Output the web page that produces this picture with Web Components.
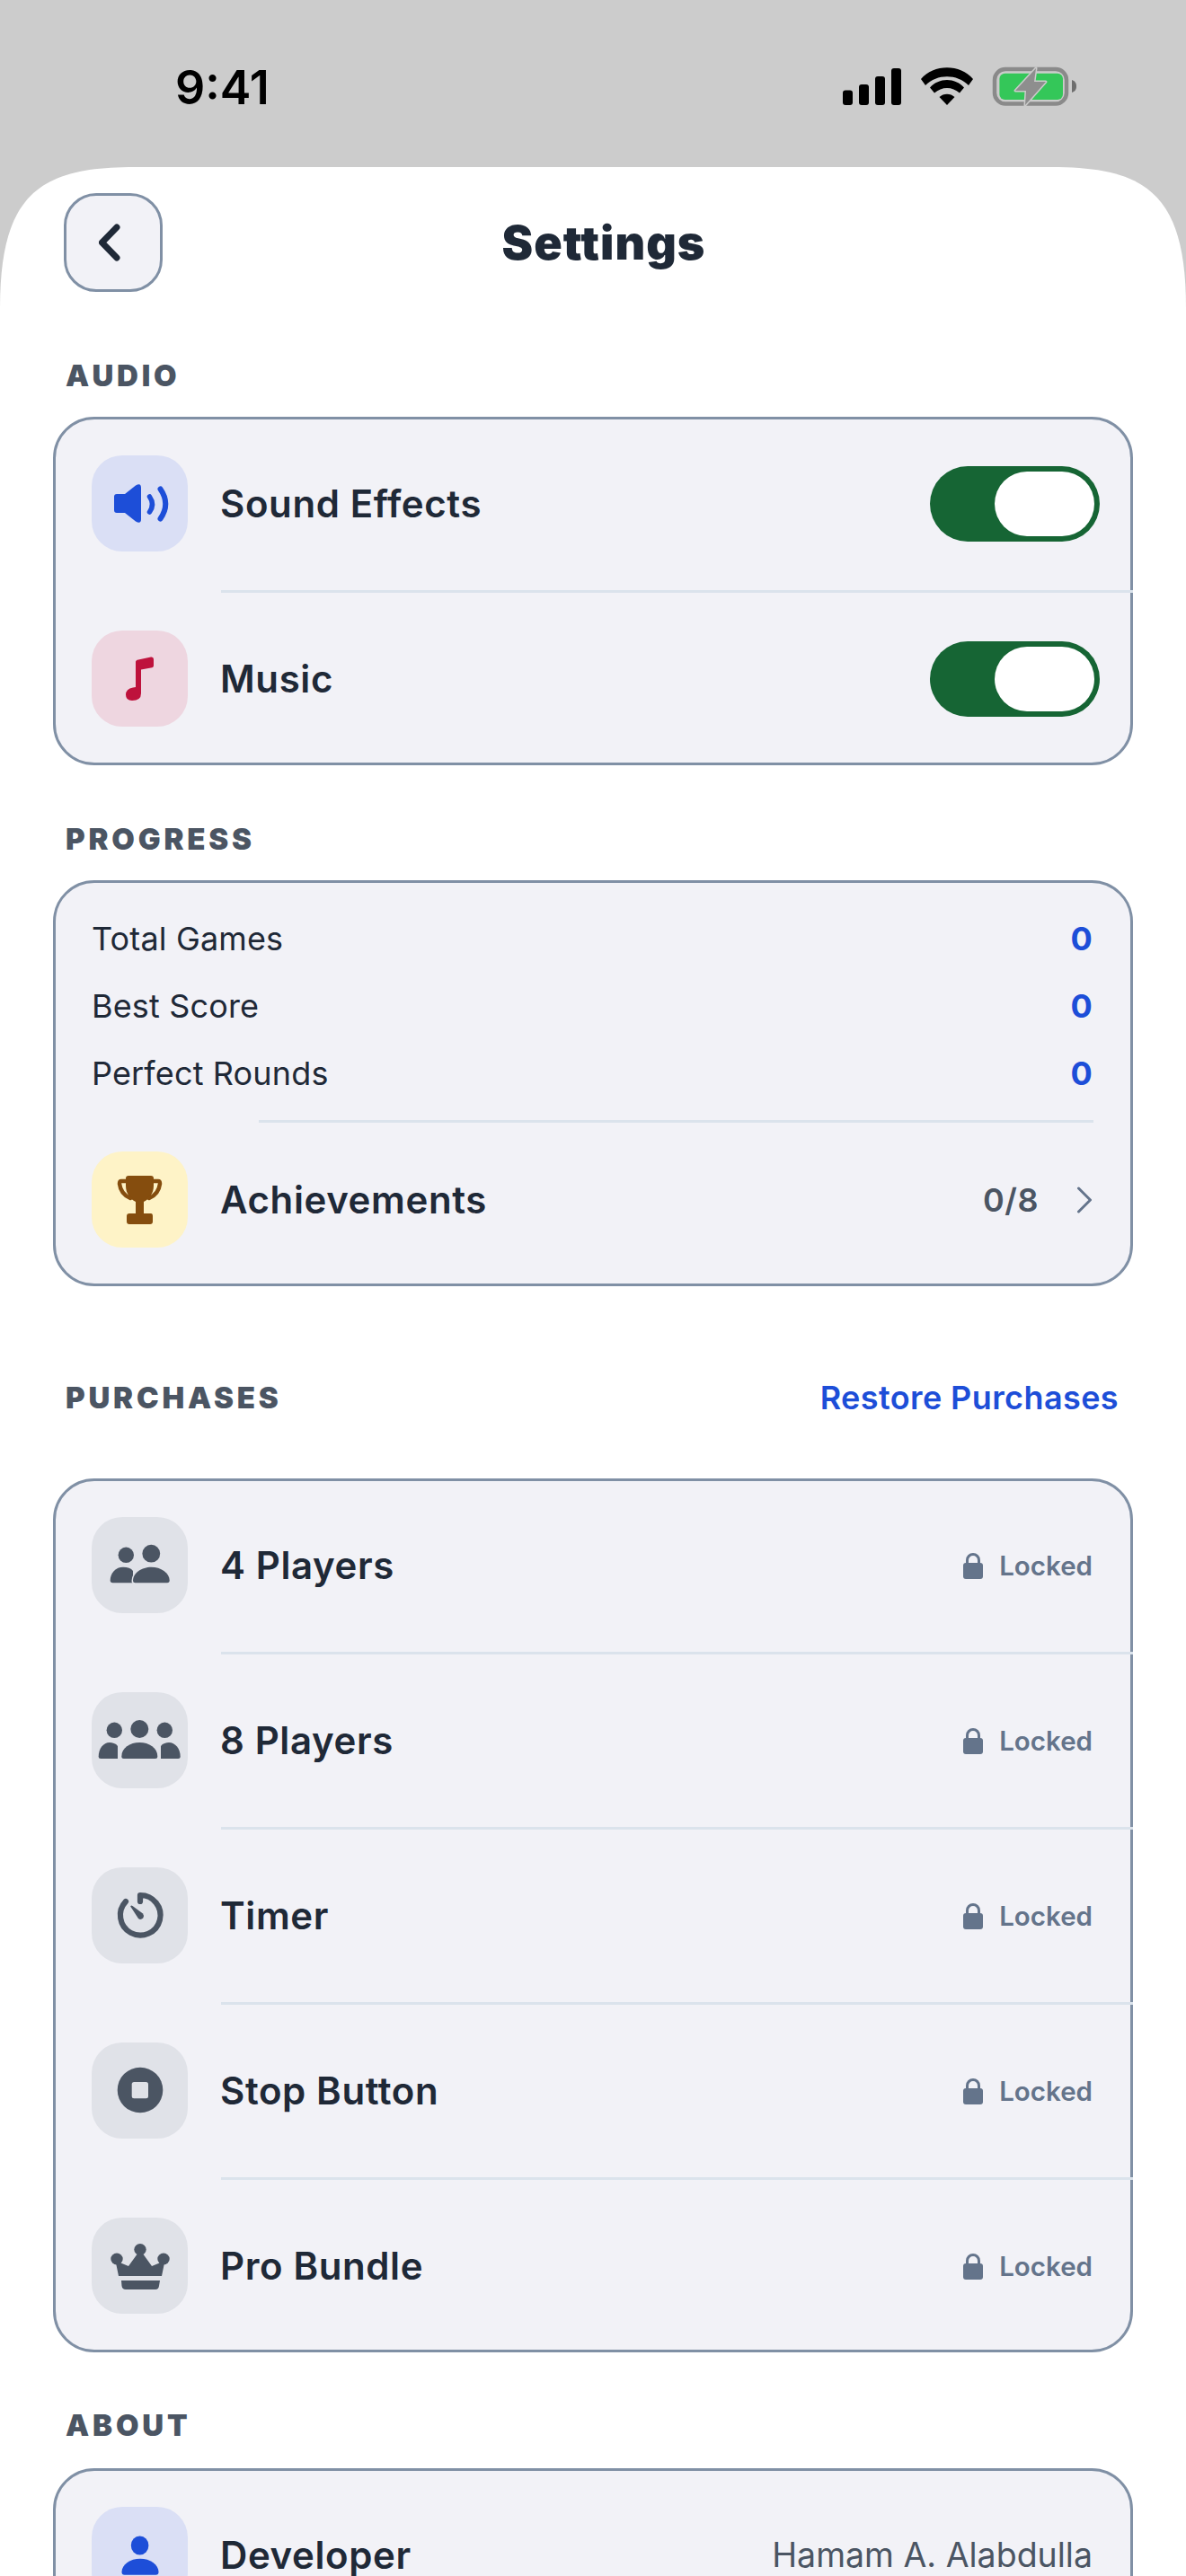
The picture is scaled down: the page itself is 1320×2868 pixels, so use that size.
<!DOCTYPE html>
<html lang="en">
<head>
<meta charset="utf-8">
<title>Settings</title>
<style>
  html, body { margin: 0; padding: 0; background: #ccc; }
  body { font-family: Inter, "Noto Sans", sans-serif; color: #1f2937; }
</style>
</head>
<body>
<settings-app>
  <status-bar slot="status"></status-bar>

  <nav-header title="Settings"></nav-header>

  <section-block heading="AUDIO" style="--gap:73px;--label-gap:26px">
    <settings-card>
      <setting-row label="Sound Effects" first>
        <app-icon slot="icon" name="speaker" tone="blue"></app-icon>
        <toggle-switch slot="end"></toggle-switch>
      </setting-row>
      <setting-row label="Music" last no-line>
        <app-icon slot="icon" name="music" tone="red"></app-icon>
        <toggle-switch slot="end"></toggle-switch>
      </setting-row>
    </settings-card>
  </section-block>

  <section-block heading="PROGRESS" style="--gap:62px;--label-gap:26px">
    <settings-card>
      <stat-list>
        <stat-row label="Total Games" value="0"></stat-row>
        <stat-row label="Best Score" value="0"></stat-row>
        <stat-row label="Perfect Rounds" value="0"></stat-row>
      </stat-list>
      <setting-row label="Achievements" last no-line compact>
        <app-icon slot="icon" name="trophy" tone="yellow"></app-icon>
        <count-link slot="end" value="0/8"></count-link>
      </setting-row>
    </settings-card>
  </section-block>

  <section-block heading="PURCHASES" action="Restore Purchases" style="--gap:104px;--label-gap:70px">
    <settings-card>
      <setting-row label="4 Players" first>
        <app-icon slot="icon" name="two" tone="gray"></app-icon>
        <locked-badge slot="end"></locked-badge>
      </setting-row>
      <setting-row label="8 Players">
        <app-icon slot="icon" name="three" tone="gray"></app-icon>
        <locked-badge slot="end"></locked-badge>
      </setting-row>
      <setting-row label="Timer">
        <app-icon slot="icon" name="timer" tone="gray"></app-icon>
        <locked-badge slot="end"></locked-badge>
      </setting-row>
      <setting-row label="Stop Button">
        <app-icon slot="icon" name="stop" tone="gray"></app-icon>
        <locked-badge slot="end"></locked-badge>
      </setting-row>
      <setting-row label="Pro Bundle" last no-line>
        <app-icon slot="icon" name="crown" tone="gray"></app-icon>
        <locked-badge slot="end"></locked-badge>
      </setting-row>
    </settings-card>
  </section-block>

  <section-block heading="ABOUT" style="--gap:61px;--label-gap:28px">
    <settings-card>
      <setting-row label="Developer" first>
        <app-icon slot="icon" name="person" tone="blue"></app-icon>
        <plain-value slot="end">Hamam A. Alabdulla</plain-value>
      </setting-row>
    </settings-card>
  </section-block>
</settings-app>

<script>
class SettingsApp extends HTMLElement {
  constructor() {
    super();
    this.attachShadow({ mode: 'open' }).innerHTML = `
      <style>
        :host { display: block; width: 1320px; height: 2868px; overflow: hidden; background: #ccc; }
        .sheet {
          background: #fff;
          height: 2682px;
          clip-path: path("M0 157 C0 28 46 0 150 0 H1170 C1274 0 1320 28 1320 157 V2682 H0 Z");
        }
      </style>
      <slot name="status"></slot>
      <div class="sheet"><slot></slot></div>`;
  }
}

class StatusBar extends HTMLElement {
  constructor() {
    super();
    this.attachShadow({ mode: 'open' }).innerHTML = `
      <style>
        :host { display: flex; justify-content: space-between; align-items: flex-start; height: 186px; padding: 75px 122px 0 195px; box-sizing: border-box; }
        .time { margin-top: 1px; font: 600 52px/44px Inter, sans-serif; color: #000; }
        .icons { display: flex; align-items: flex-start; gap: 22px; }
        svg { display: block; overflow: visible; }
      </style>
      <span class="time">9:41</span>
      <div class="icons">
        <svg width="65" height="42" viewBox="0 0 65 42">
          <rect x="0" y="25.500" width="11" height="16.500" rx="3"/>
          <rect x="18" y="19" width="11" height="23" rx="3"/>
          <rect x="36" y="10" width="11" height="32" rx="3"/>
          <rect x="54" y="1" width="11" height="41" rx="3"/>
        </svg>
        <svg width="58" height="42" viewBox="0 0 58 42">
          <path d="M0 13 C14 -4 44 -4 58 13 L53 20 C40 7 18 7 5 20 Z"/>
          <path d="M10 22.500 C20 11 38 11 48 22.500 L43 28.500 C35 21 23 21 15 28.500 Z"/>
          <path d="M20.500 33 C25 28.500 33 28.500 37.500 33 L29 42 Z"/>
        </svg>
        <svg width="93" height="44" viewBox="0 0 93 44">
          <rect x="2" y="2" width="80" height="38.500" rx="12" fill="none" stroke="#8a8a8a" stroke-width="4.500"/>
          <rect x="7.400" y="6.700" width="70.600" height="29.300" rx="6" fill="#34c759"/>
          <path d="M88 14 C91 15 93 17 93 21 C93 25 91 27 88 28 Z" fill="#6e6e6e"/>
          <path d="M48 1 L25 26 H37 L36 42 L59 16 H46 Z" fill="#8e8e8e" stroke="#ccc" stroke-width="3" stroke-linejoin="round" paint-order="stroke"/>
        </svg>
      </div>`;
  }
}

class NavHeader extends HTMLElement {
  constructor() {
    super();
    this.attachShadow({ mode: 'open' }).innerHTML = `
      <style>
        :host { display: flex; align-items: center; padding: 29px 157px 0 71px; }
        button {
          width: 110px; height: 110px; padding: 0; box-sizing: border-box;
          display: flex; align-items: center; justify-content: center;
          background: #f2f2f7; border: 3px solid #8090a5; border-radius: 36px;
        }
        button svg { margin-right: 4px; }
        h1 { flex: 1; margin: 0; padding-top: 2px; text-align: center; font: 900 52px/60px Inter, sans-serif; letter-spacing: 1px; color: #1f2937; }
      </style>
      <button aria-label="Back">
        <svg width="28" height="44" viewBox="0 0 28 44" fill="none" stroke="#1f2937" stroke-width="7" stroke-linecap="round" stroke-linejoin="round">
          <path d="M20 5 L3.500 22 L20 39"/>
        </svg>
      </button>
      <h1>${this.getAttribute('title')}</h1>`;
  }
}

class SectionBlock extends HTMLElement {
  constructor() {
    super();
    const action = this.getAttribute('action');
    this.attachShadow({ mode: 'open' }).innerHTML = `
      <style>
        :host { display: block; margin-top: var(--gap, 60px); }
        .head { display: flex; justify-content: space-between; align-items: center; height: 40px; padding: 0 75px 0 73px; margin-bottom: var(--label-gap, 26px); }
        h2 { margin: 0; font: 900 33px/40px Inter, sans-serif; letter-spacing: 3.800px; color: #4b5563; }
        a { font: 600 36px/40px Inter, sans-serif; letter-spacing: 0.400px; color: #1d4ed8; }
        .body { padding: 0 59px; }
      </style>
      <div class="head">
        <h2>${this.getAttribute('heading')}</h2>
        ${action ? `<a>${action}</a>` : ''}
      </div>
      <div class="body"><slot></slot></div>`;
  }
}

class SettingsCard extends HTMLElement {
  constructor() {
    super();
    this.attachShadow({ mode: 'open' }).innerHTML = `
      <style>
        :host { display: block; background: #f2f2f7; border: 3px solid #8090a5; border-radius: 46px; }
      </style>
      <slot></slot>`;
  }
}

class SettingRow extends HTMLElement {
  constructor() {
    super();
    this.attachShadow({ mode: 'open' }).innerHTML = `
      <style>
        :host { display: block; }
        .row { display: flex; align-items: center; gap: 36px; padding: 42px 42px 43px 40px; }
        :host([first]) .row { padding-top: 40px; }
        :host([last]) .row { padding-bottom: 40px; }
        :host([compact]) .row { padding-top: 32px; }
        .label { flex: 1; font: 600 42px/52px Inter, sans-serif; letter-spacing: 0.600px; color: #1f2937; }
        .line { height: 3px; margin: 0 -3px 0 184px; background: #dbe3ec; position: relative; }
        :host([no-line]) .line { display: none; }
      </style>
      <div class="row">
        <slot name="icon"></slot>
        <span class="label">${this.getAttribute('label')}</span>
        <slot name="end"></slot>
      </div>
      <div class="line"></div>`;
  }
}

const ICONS = {
  speaker: `
    <path d="M28 43 H37 L49 33.500 Q55 30 55 36 V71 Q55 77 49 73.500 L37 64 H28 Q25 64 25 61 V46 Q25 43 28 43 Z"/>
    <path d="M64.500 46 Q70.500 54.500 64.500 63" fill="none" stroke="currentColor" stroke-width="5.500" stroke-linecap="round"/>
    <path d="M76.500 37.500 Q88 54 76.500 70.500" fill="none" stroke="currentColor" stroke-width="6" stroke-linecap="round"/>`,
  music: `
    <path d="M49 35 Q49 33 52 32.500 L66 29.500 Q69 29 69 32 V39 Q69 41 66 41.500 L55 43.500 V70 Q55 78 45 78 Q38 78 38 71.500 Q38 65 46 63.500 L49 63 Z"/>`,
  trophy: `
    <path d="M38 30 Q38 27 41 27 H66 Q69 27 69 30 V38 C69 47 64 53 58 56 V69 H66 Q68 69 68 72 V78 Q68 81 65 81 H42 Q39 81 39 78 V72 Q39 69 42 69 H49 V56 C43 53 38 47 38 38 Z"/>
    <path d="M38 33 H33 Q31 33 31 36 C32 44 36 49 43 52" fill="none" stroke="currentColor" stroke-width="4.500" stroke-linecap="round"/>
    <path d="M69 33 H74 Q76 33 76 36 C75 44 71 49 64 52" fill="none" stroke="currentColor" stroke-width="4.500" stroke-linecap="round"/>`,
  two: `
    <circle cx="38.300" cy="42.300" r="8.700"/>
    <circle cx="66.300" cy="40.700" r="9.900"/>
    <path d="M20.700 70.500 Q20.700 73.300 23.500 73.300 H46 V60 C44 57 40 55.700 35 55.700 C27 55.700 20.700 62 20.700 70.500 Z"/>
    <path d="M46 71 Q46 73.300 48.500 73.300 H84 Q86.700 73.300 86.700 70.500 C86.700 62 77 55.700 66.300 55.700 C56 55.700 46 62 46 71 Z" stroke="#e0e2e8" stroke-width="3" paint-order="stroke"/>`,
  three: `
    <circle cx="25.300" cy="42.300" r="8.700"/>
    <circle cx="53.300" cy="41" r="10"/>
    <circle cx="81.300" cy="42.300" r="8.700"/>
    <path d="M7.700 71.500 Q7.700 74 10.200 74 H29 V60 C27 57 23 56 20 56 C13 56 7.700 63 7.700 71.500 Z"/>
    <path d="M98.700 71.500 Q98.700 74 96.200 74 H77 V60 C79 57 83 56 86 56 C93 56 98.700 63 98.700 71.500 Z"/>
    <path d="M33.300 71.500 Q33.300 74 35.800 74 H70.800 Q73.300 74 73.300 71.500 C73.300 62 64 56 53.300 56 C42.600 56 33.300 62 33.300 71.500 Z" stroke="#e0e2e8" stroke-width="3" paint-order="stroke"/>`,
  timer: `
    <path d="M38 38 A22.300 22.300 0 1 0 54 31 V38" fill="none" stroke="currentColor" stroke-width="6.200" stroke-linecap="round" stroke-linejoin="round"/>
    <path d="M43.200 43.400 Q44 42 45.500 43 L57 51.500 Q59 54 57.300 56.500 Q54.500 59 52 57 Z"/>`,
  stop: `
    <circle cx="54" cy="53" r="25.300"/>
    <rect x="44.700" y="44" width="18.300" height="18.300" rx="2.500" fill="#e0e2e8"/>`,
  crown: `
    <ellipse cx="54" cy="35.500" rx="6.700" ry="6.400"/>
    <ellipse cx="28" cy="46" rx="6.700" ry="6.400"/>
    <ellipse cx="80" cy="46" rx="6.700" ry="6.400"/>
    <path d="M26.500 48 L30 65 H78 L81.500 48 L67 54 L54 36 L41 54 Z"/>
    <path d="M33 70 H76 L75 76 Q74.500 80 71 80 H38 Q34 80 33.500 76 Z"/>`,
  person: `
    <ellipse cx="53.600" cy="43" rx="9.800" ry="10.500"/>
    <path d="M33.500 72.500 Q33.500 75.700 36.500 75.700 H71.500 Q74.500 75.700 74.500 72.500 C74.500 64 65 57.700 54 57.700 C43 57.700 33.500 64 33.500 72.500 Z"/>`,
};

const TONES = {
  blue: ['#dadff5', '#1d4ed8'],
  red: ['#eed6e0', '#be123c'],
  yellow: ['#fef3c7', '#854d0e'],
  gray: ['#e0e2e8', '#4b5563'],
};

class AppIcon extends HTMLElement {
  constructor() {
    super();
    const [bg, fg] = TONES[this.getAttribute('tone')];
    this.attachShadow({ mode: 'open' }).innerHTML = `
      <style>
        :host { display: block; flex: none; width: 107px; height: 107px; border-radius: 34px; background: ${bg}; color: ${fg}; }
        svg { display: block; }
      </style>
      <svg width="107" height="107" viewBox="0 0 107 107" fill="currentColor">${ICONS[this.getAttribute('name')]}</svg>`;
  }
}

class ToggleSwitch extends HTMLElement {
  constructor() {
    super();
    this.attachShadow({ mode: 'open' }).innerHTML = `
      <style>
        :host { display: flex; justify-content: flex-end; align-items: center; width: 189px; height: 84px; margin-right: -8px; padding: 0 6px; box-sizing: border-box; border-radius: 42px; background: #166534; }
        i { display: block; width: 111px; height: 72px; border-radius: 36px; background: #fff; }
      </style>
      <i></i>`;
  }
}

class StatList extends HTMLElement {
  constructor() {
    super();
    this.attachShadow({ mode: 'open' }).innerHTML = `
      <style>
        :host { display: block; padding-top: 24px; }
        .line { height: 3px; margin: 15px 41px 0 226px; background: #dbe3ec; }
      </style>
      <slot></slot>
      <div class="line"></div>`;
  }
}

class StatRow extends HTMLElement {
  constructor() {
    super();
    this.attachShadow({ mode: 'open' }).innerHTML = `
      <style>
        :host { display: flex; justify-content: space-between; align-items: center; height: 75px; padding: 0 42px 0 40px; font: 400 36px/44px Inter, sans-serif; letter-spacing: 0.150px; color: #1f2937; }
        b { font-weight: 700; color: #1d4ed8; }
      </style>
      <span>${this.getAttribute('label')}</span>
      <b>${this.getAttribute('value')}</b>`;
  }
}

class CountLink extends HTMLElement {
  constructor() {
    super();
    this.attachShadow({ mode: 'open' }).innerHTML = `
      <style>
        :host { display: flex; align-items: center; gap: 42px; font: 600 36px/44px Inter, sans-serif; letter-spacing: 0.500px; color: #4b5563; }
        svg { display: block; }
      </style>
      <span>${this.getAttribute('value')}</span>
      <svg width="18" height="30" viewBox="0 0 18 30" fill="none" stroke="#64748b" stroke-width="3" stroke-linecap="round" stroke-linejoin="round"><path d="M2.500 2 L15.500 15 L2.500 28"/></svg>`;
  }
}

class LockedBadge extends HTMLElement {
  constructor() {
    super();
    this.attachShadow({ mode: 'open' }).innerHTML = `
      <style>
        :host { display: flex; align-items: center; gap: 18px; font: 600 29.500px/36px Inter, sans-serif; color: #64748b; }
        svg { display: block; }
      </style>
      <svg width="22" height="31" viewBox="0 0 22 31"><path d="M4.500 15 V10 A6.500 6.500 0 0 1 17.500 10 V15" fill="none" stroke="#64748b" stroke-width="3"/><rect y="13" width="22" height="18" rx="3" fill="#64748b"/></svg>
      <span>Locked</span>`;
  }
}

class PlainValue extends HTMLElement {
  constructor() {
    super();
    this.attachShadow({ mode: 'open' }).innerHTML = `
      <style>
        :host { display: block; font: 400 37.500px/44px Inter, sans-serif; color: #4b5563; }
      </style>
      <slot></slot>`;
  }
}

customElements.define('settings-app', SettingsApp);
customElements.define('status-bar', StatusBar);
customElements.define('nav-header', NavHeader);
customElements.define('section-block', SectionBlock);
customElements.define('settings-card', SettingsCard);
customElements.define('setting-row', SettingRow);
customElements.define('app-icon', AppIcon);
customElements.define('toggle-switch', ToggleSwitch);
customElements.define('stat-list', StatList);
customElements.define('stat-row', StatRow);
customElements.define('count-link', CountLink);
customElements.define('locked-badge', LockedBadge);
customElements.define('plain-value', PlainValue);
</script>
</body>
</html>
